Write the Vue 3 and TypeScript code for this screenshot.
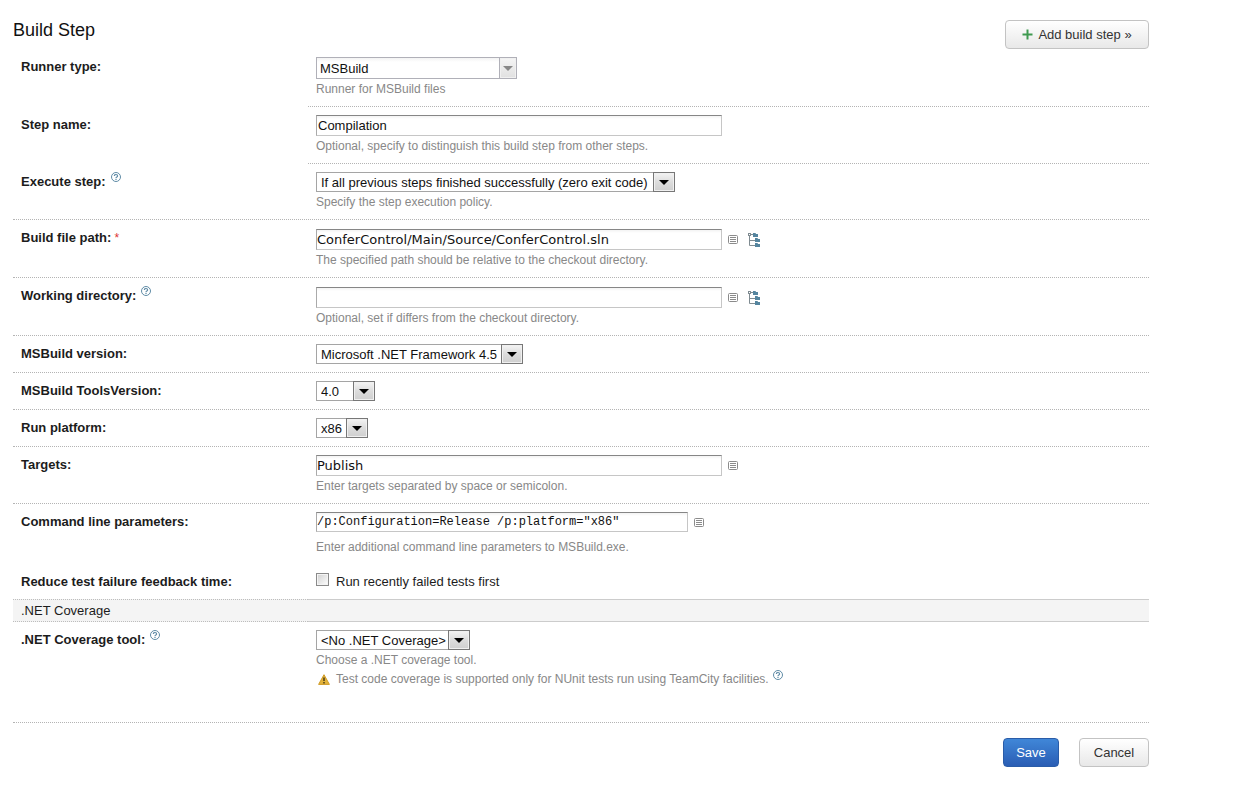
<script setup lang="ts">
import { defineComponent, h, ref } from 'vue'

interface Field {
  id: string
  label: string
  kind: 'text' | 'select'
  size: string
  font?: string
  options?: string[]
  hint?: string
  help?: boolean
  required?: boolean
  list?: boolean
  tree?: boolean
  half?: boolean
  borderless?: boolean
}

const fields: Field[] = [
  { id: 'runner', label: 'Runner type:', kind: 'select', size: 'w-runner', options: ['MSBuild'], hint: 'Runner for MSBuild files', half: true },
  { id: 'name', label: 'Step name:', kind: 'text', size: 'w-long', font: 'sans', hint: 'Optional, specify to distinguish this build step from other steps.', half: true },
  { id: 'execute', label: 'Execute step:', kind: 'select', size: 'w-execute', options: ['If all previous steps finished successfully (zero exit code)'], hint: 'Specify the step execution policy.', help: true },
  { id: 'path', label: 'Build file path:', kind: 'text', size: 'w-long', font: 'wide', hint: 'The specified path should be relative to the checkout directory.', required: true, list: true, tree: true },
  { id: 'workdir', label: 'Working directory:', kind: 'text', size: 'w-long', font: 'wide', hint: 'Optional, set if differs from the checkout directory.', help: true, list: true, tree: true },
  { id: 'version', label: 'MSBuild version:', kind: 'select', size: 'w-version', options: ['Microsoft .NET Framework 4.5'] },
  { id: 'tools', label: 'MSBuild ToolsVersion:', kind: 'select', size: 'w-tools', options: ['4.0'] },
  { id: 'platform', label: 'Run platform:', kind: 'select', size: 'w-platform', options: ['x86'] },
  { id: 'targets', label: 'Targets:', kind: 'text', size: 'w-long', font: 'wide', hint: 'Enter targets separated by space or semicolon.', list: true },
  { id: 'params', label: 'Command line parameters:', kind: 'text', size: 'w-params', font: 'mono', hint: 'Enter additional command line parameters to MSBuild.exe.', list: true, borderless: true },
]

const values = ref<Record<string, string>>({
  runner: 'MSBuild',
  name: 'Compilation',
  execute: 'If all previous steps finished successfully (zero exit code)',
  path: 'ConferControl/Main/Source/ConferControl.sln',
  workdir: '',
  version: 'Microsoft .NET Framework 4.5',
  tools: '4.0',
  platform: 'x86',
  targets: 'Publish',
  params: '/p:Configuration=Release /p:platform="x86"',
  coverage: '<No .NET Coverage>',
})
const recentFirst = ref(false)

const HelpIcon = defineComponent(() => () =>
  h('svg', { width: 10, height: 10, viewBox: '0 0 10 10', fill: 'none', stroke: '#5f8ba6', 'aria-hidden': 'true' }, [
    h('circle', { cx: 5, cy: 5, r: 4.5 }),
    h('path', { d: 'M3.4 3.9C3.4 2 6.6 2 6.6 3.9C6.6 5 5 4.8 5 6.1M5 6.8V7.9', 'stroke-width': 1.2 }),
  ]),
)
</script>

<template>
  <main class="page">
    <header class="head">
      <h1>Build Step</h1>
      <button type="button" class="btn add">
        <svg width="11" height="11" viewBox="0 0 11 11" aria-hidden="true"><path d="M5.5 0.5V10.5M0.5 5.5H10.5" stroke="#3f9a50" stroke-width="2" /></svg>
        <span>Add build step »</span>
      </button>
    </header>

    <form @submit.prevent>
      <div v-for="f in fields" :key="f.id" class="row" :class="{ half: f.half, borderless: f.borderless }">
        <div class="name">
          <label :for="f.id">{{ f.label }}<span v-if="f.required" class="star"> *</span></label>
          <a v-if="f.help" href="#" class="help" aria-label="Help"><HelpIcon /></a>
        </div>
        <div class="value">
          <div class="line" :class="{ tall: f.tree }">
            <span v-if="f.kind === 'select'" class="pick" :class="[f.size, { combo: f.id === 'runner' }]">
              <select :id="f.id" v-model="values[f.id]">
                <option v-for="o in f.options" :key="o">{{ o }}</option>
              </select>
              <span class="arrow"><svg width="10" height="5" viewBox="0 0 10 5" aria-hidden="true"><path d="M0 0H10L5 5Z" fill="currentColor" /></svg></span>
            </span>
            <input v-else :id="f.id" v-model="values[f.id]" type="text" class="text" :class="[f.size, f.font]" />
            <button v-if="f.list" type="button" class="icon" aria-label="Insert parameter">
              <svg width="10" height="9" viewBox="0 0 10 9" fill="none" stroke="#8b8b8b" aria-hidden="true">
                <rect x="0.5" y="0.5" width="9" height="8" rx="1" />
                <path d="M2 2.5H8M2 4.5H8M2 6.5H8" />
              </svg>
            </button>
            <button v-if="f.tree" type="button" class="icon tree" aria-label="Browse files">
              <svg width="13" height="14" viewBox="0 0 13 14" aria-hidden="true">
                <path d="M1.5 3V12.5H7M2 7.5H7M3 1.5H5" fill="none" stroke="#7f8b91" />
                <rect x="0.5" y="0.5" width="2" height="2" fill="#fff" stroke="#7f8b91" />
                <path d="M5 0H7.5L8 1H10V4H5ZM7 5H9.5L10 6H12V9H7ZM7 10H9.5L10 11H12V14H7Z" fill="#55859f" />
              </svg>
            </button>
          </div>
          <p v-if="f.hint" class="hint">{{ f.hint }}</p>
        </div>
      </div>

      <div class="row borderless">
        <div class="name"><span>Reduce test failure feedback time:</span></div>
        <div class="value">
          <label class="check"><input v-model="recentFirst" type="checkbox" /><span>Run recently failed tests first</span></label>
        </div>
      </div>

      <div class="section">
        <h2>.NET Coverage</h2>
        <div class="rest"></div>
      </div>

      <div class="row last">
        <div class="name">
          <label for="coverage">.NET Coverage tool:</label>
          <a href="#" class="help" aria-label="Help"><HelpIcon /></a>
        </div>
        <div class="value">
          <div class="line">
            <span class="pick w-coverage">
              <select id="coverage" v-model="values.coverage"><option>&lt;No .NET Coverage&gt;</option></select>
              <span class="arrow"><svg width="10" height="5" viewBox="0 0 10 5" aria-hidden="true"><path d="M0 0H10L5 5Z" fill="currentColor" /></svg></span>
            </span>
          </div>
          <p class="hint">Choose a .NET coverage tool.</p>
          <p class="hint warn">
            <svg width="12" height="11" viewBox="0 0 12 11" aria-hidden="true">
              <path d="M6 0.7L11.4 10.4H0.6Z" fill="#e3b33a" stroke="#cf9b25" stroke-linejoin="round" />
              <path d="M6 3.5V7M6 8V9.5" stroke="#4a3b16" stroke-width="1.5" />
            </svg>
            <span>Test code coverage is supported only for NUnit tests run using TeamCity facilities.</span>
            <a href="#" class="help" aria-label="Help"><HelpIcon /></a>
          </p>
        </div>
      </div>

      <footer class="actions">
        <button type="submit" class="btn save">Save</button>
        <button type="button" class="btn cancel">Cancel</button>
      </footer>
    </form>
  </main>
</template>

<style>
body {
  margin: 0;
  background: #fff;
}
</style>

<style scoped>
* {
  box-sizing: border-box;
}
.page {
  padding: 20px 110px 24px 13px;
  font: 13px/19px "Liberation Sans", Arial, sans-serif;
  color: #1c1c1c;
}
.head {
  display: flex;
  justify-content: space-between;
  align-items: flex-start;
}
h1 {
  margin: 0;
  font-size: 18px;
  line-height: 20px;
  font-weight: 400;
  color: #111;
}
h2 {
  margin: 0;
  font-size: 13px;
  font-weight: 400;
}
button,
input,
select {
  margin: 0;
  font: inherit;
  color: #111;
}
.btn {
  display: flex;
  align-items: center;
  justify-content: center;
  height: 29px;
  padding: 0;
  border: 1px solid #c3c3c3;
  border-radius: 4px;
  background: linear-gradient(#fff, #e8e8e8);
  color: #333;
}
.add {
  width: 144px;
  gap: 5px;
}
.row {
  display: grid;
  grid-template-columns: 295px 1fr;
  border-bottom: 1px dotted #b4b4b4;
}
.row.half {
  border-bottom: 0;
}
.row.half .value {
  border-bottom: 1px dotted #b4b4b4;
}
.row.borderless {
  border-bottom: 0;
}
.name,
.value {
  padding: 8px;
}
.value {
  padding-right: 0;
}
.name {
  display: flex;
  align-items: flex-start;
  gap: 5px;
  font-weight: 700;
}
.star {
  color: #d33;
  font-size: 12px;
  font-weight: 400;
}
.help {
  display: block;
  height: 10px;
}
.help svg,
.icon svg,
.arrow svg {
  display: block;
}
.line {
  display: flex;
  align-items: flex-end;
}
.line.tall {
  height: 22px;
}
.text {
  height: 21px;
  padding: 0 1px;
  border: 1px solid #c6c6c6;
  border-top-color: #868686;
  border-left-color: #aaa;
  border-radius: 0;
  background: linear-gradient(#f3f3f3, #fff 3px);
}
.wide {
  padding: 0;
  font-family: "DejaVu Sans", Verdana, sans-serif;
}
.mono {
  height: 20px;
  padding: 0;
  font: 12px "Liberation Mono", "Courier New", monospace;
}
.line:has(.mono) {
  padding-bottom: 5px;
}
.icon {
  display: flex;
  align-items: center;
  height: 21px;
  margin-left: 6px;
  padding: 0;
  border: 0;
  background: none;
}
.mono + .icon {
  height: 20px;
}
.tree {
  margin-left: 10px;
}
.pick {
  display: grid;
  grid-template-rows: 100%;
  height: 20px;
}
.pick > * {
  grid-area: 1 / 1;
}
.pick select {
  appearance: none;
  width: 100%;
  height: 100%;
  padding: 0 0 0 4px;
  border: 1px solid #a5a5a5;
  border-radius: 0;
  background: #fff;
}
.arrow {
  justify-self: end;
  display: flex;
  align-items: center;
  justify-content: center;
  width: 22px;
  border: 1px solid #777;
  background: linear-gradient(#f4f4f4, #dcdcdc 50%, #cfcfcf);
  box-shadow: inset 0 0 0 1px #f0f0f0;
  color: #000;
  pointer-events: none;
}
.combo {
  height: 22px;
}
.combo select {
  padding-left: 3px;
  border-color: #b0b0b8;
  background: linear-gradient(#f3f3f3, #fff 4px);
}
.combo .arrow {
  width: 18px;
  border-color: #b0b0b8;
  background: linear-gradient(#f5f5f5, #e0e0e0);
  color: #888;
}
.w-runner { width: 201px; }
.w-long { width: 406px; }
.w-execute { width: 359px; }
.w-version { width: 207px; }
.w-tools { width: 59px; }
.w-platform { width: 52px; }
.w-params { width: 372px; }
.w-coverage { width: 154px; }
.hint {
  margin: 0;
  padding-top: 1px;
  font-size: 12px;
  line-height: 18px;
  color: #888;
}
.warn {
  display: flex;
  gap: 6px;
  padding-left: 2px;
}
.warn > svg {
  margin-top: 4px;
}
.warn .help {
  margin-left: -2px;
}
.check {
  display: flex;
  gap: 7px;
}
.check input {
  appearance: none;
  width: 13px;
  height: 13px;
  margin-top: 1px;
  border: 1px solid #8a8a8a;
  background: linear-gradient(135deg, #cfcfcf, #fff);
  box-shadow: inset 0 0 0 1px #f4f4f4;
}
.section {
  display: grid;
  grid-template-columns: 295px 1fr;
  background: #f4f4f4;
}
.section h2 {
  padding: 1px 8px;
  border: dotted #bdbdbd;
  border-width: 1px 0;
}
.rest {
  border: solid #ccc;
  border-width: 1px 0;
}
.last .value {
  padding-bottom: 34px;
}
.actions {
  display: flex;
  justify-content: flex-end;
  gap: 20px;
  padding-top: 15px;
}
.save {
  width: 56px;
  border-color: #2a5ca8;
  background: linear-gradient(#4087d8, #2a5db4);
  color: #fff;
}
.cancel {
  width: 70px;
}
</style>
